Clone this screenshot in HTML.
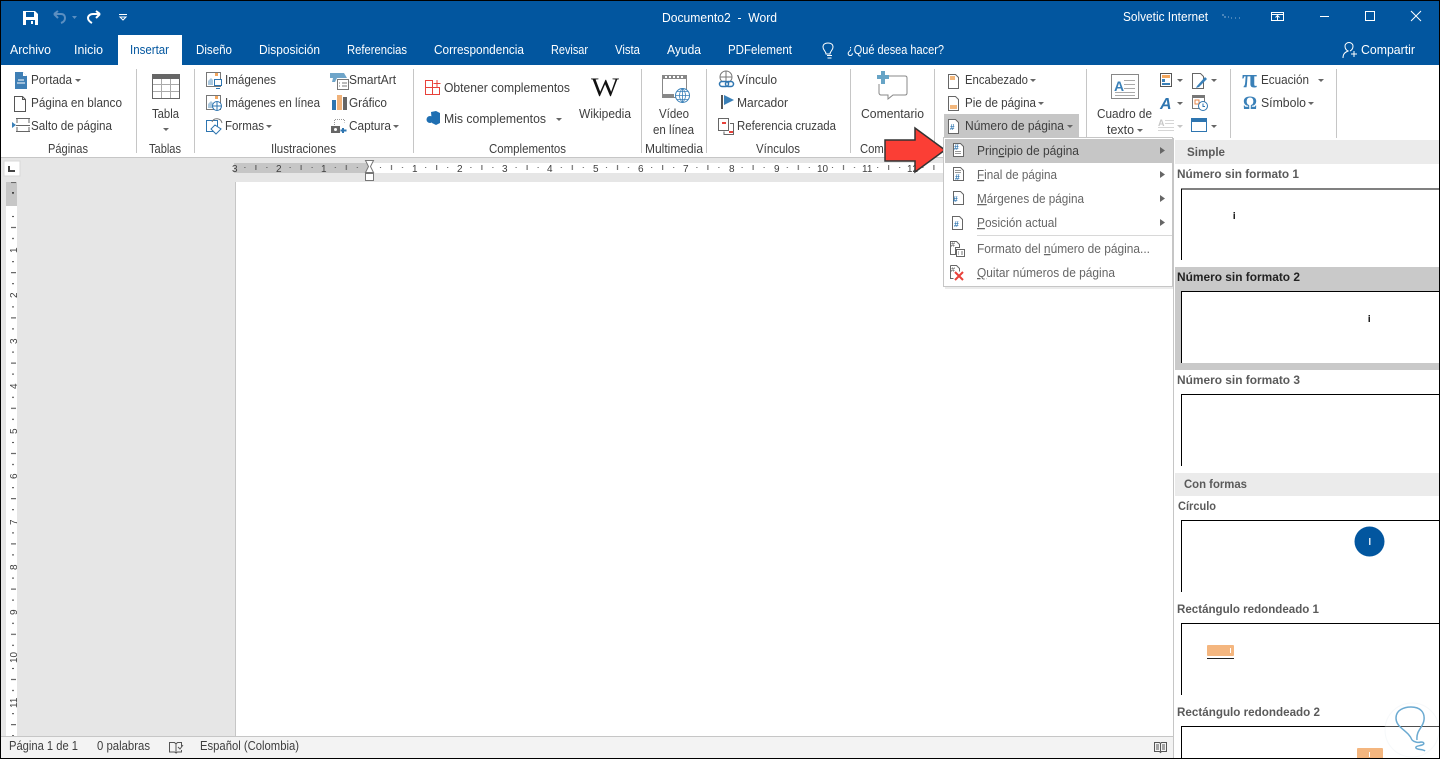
<!DOCTYPE html>
<html lang="es"><head><meta charset="utf-8"><title>Documento2 - Word</title>
<style>
html,body{margin:0;padding:0;background:#fff;width:1440px;height:759px;overflow:hidden}
svg{display:block}
text{font-family:"Liberation Sans",sans-serif;font-size:12.5px;fill:#3e3e3e}
.w text{fill:#fff}
.b text{font-weight:bold;fill:#5a5a5a;font-size:12px}
.u{text-decoration:underline}
</style></head><body>
<svg xmlns="http://www.w3.org/2000/svg" width="1440" height="759" viewBox="0 0 1440 759">
<defs>
<pattern id="rx" x="369" y="0" width="45.2" height="12" patternUnits="userSpaceOnUse">
<rect x="11" y="5" width="1" height="1" fill="#555"/><rect x="22" y="3" width="1" height="5" fill="#555"/><rect x="33" y="5" width="1" height="1" fill="#555"/>
</pattern>
<pattern id="ry" x="0" y="205" width="12" height="45.2" patternUnits="userSpaceOnUse">
<rect x="6" y="11" width="2" height="1" fill="#444"/><rect x="5" y="22" width="5" height="1" fill="#444"/><rect x="6" y="33" width="2" height="1" fill="#444"/>
</pattern>
</defs>

<rect width="1440" height="759" fill="#e6e6e6"/>
<!-- title bar -->
<rect x="0" y="0" width="1440" height="65" fill="#02569f"/>
<rect x="118" y="35" width="64" height="30" fill="#fff"/>
<rect x="0" y="65" width="1440" height="92" fill="#fff"/>
<rect x="0" y="157" width="1440" height="1" fill="#c6c6c6"/>

<!-- QAT icons -->
<path d="M23 11h12l3 3v11H23z" fill="#fff"/><rect x="26" y="12" width="8" height="5" fill="#02569f"/><rect x="26" y="20" width="9" height="5" fill="#02569f"/><rect x="31" y="21" width="2" height="3" fill="#fff"/>
<g fill="none" stroke="#5c8fc1" stroke-width="2"><path d="M54 14l4-3M54 14l4 4M54 14h7c3 0 4 2 4 4s-1 4-4 5"/></g>
<path d="M72 16h5l-2.500 3z" fill="#5c8fc1"/>
<g fill="none" stroke="#fff" stroke-width="2"><path d="M100 14l-4-3M100 14l-4 4M100 14h-7c-3 0-5 2-5 4s2 4 4 5"/></g>
<rect x="119" y="14" width="8" height="1" fill="#fff"/><path d="M120 17h6l-3 3z" fill="none" stroke="#fff"/>

<g class="w">
<text x="662" y="22" textLength="115" lengthAdjust="spacingAndGlyphs" xml:space="preserve">Documento2  -  Word</text>
<text x="1123" y="21" textLength="85" lengthAdjust="spacingAndGlyphs">Solvetic Internet</text>
<text x="10" y="54" textLength="41" lengthAdjust="spacingAndGlyphs">Archivo</text>
<text x="74" y="54" textLength="29" lengthAdjust="spacingAndGlyphs">Inicio</text>
<text x="196" y="54" textLength="36" lengthAdjust="spacingAndGlyphs">Diseño</text>
<text x="259" y="54" textLength="61" lengthAdjust="spacingAndGlyphs">Disposición</text>
<text x="347" y="54" textLength="60" lengthAdjust="spacingAndGlyphs">Referencias</text>
<text x="434" y="54" textLength="90" lengthAdjust="spacingAndGlyphs">Correspondencia</text>
<text x="551" y="54" textLength="37" lengthAdjust="spacingAndGlyphs">Revisar</text>
<text x="615" y="54" textLength="25" lengthAdjust="spacingAndGlyphs">Vista</text>
<text x="667" y="54" textLength="34" lengthAdjust="spacingAndGlyphs">Ayuda</text>
<text x="728" y="54" textLength="64" lengthAdjust="spacingAndGlyphs">PDFelement</text>
<text x="847" y="54" textLength="97" lengthAdjust="spacingAndGlyphs">¿Qué desea hacer?</text>
<text x="1361" y="54" textLength="54" lengthAdjust="spacingAndGlyphs">Compartir</text>
</g>
<text x="130" y="54" textLength="39" lengthAdjust="spacingAndGlyphs" style="fill:#02569f">Insertar</text>

<!-- window controls -->
<g fill="none" stroke="#fff" stroke-width="1">
<rect x="1271.500" y="12.500" width="12" height="8"/><path d="M1272 14.500h11M1277.500 20v-4M1275.500 17.500l2-2 2 2"/>
<path d="M1320 16.500h9"/><rect x="1365.500" y="11.500" width="9" height="9"/><path d="M1411 11l10 10M1421 11l-10 10"/>
<path d="M827.500 58h4M827 55.500h5M826 54c0-3-3-3.500-3-7 0-2.500 2-4 5-4s5 1.500 5 4c0 3.500-3 4-3 7z" stroke="#fff"/>
<path d="M1343 58c0-5 3-6 5-7-2-1-3-3-3-5 0-2 2-3.500 4-3.500s4 1.500 4 3.500c0 2-1 4-3 5M1351 54h6M1354 51v6"/>
</g>
<path d="M1222 15h2M1224 17h2M1228 17h1M1231 18h1M1235 18h1M1239 18h1" stroke="#8fb3d6" stroke-width="1" fill="none"/>

<!-- separators -->
<g fill="#c6c6c6">
<rect x="136" y="69" width="1" height="84"/><rect x="194" y="69" width="1" height="84"/><rect x="413" y="69" width="1" height="84"/>
<rect x="641" y="69" width="1" height="84"/><rect x="706" y="69" width="1" height="84"/><rect x="850" y="69" width="1" height="84"/>
<rect x="934" y="69" width="1" height="84"/><rect x="1086" y="69" width="1" height="70"/><rect x="1230" y="69" width="1" height="70"/><rect x="1336" y="69" width="1" height="70"/>
</g>

<!-- ribbon text -->
<text x="31" y="84" textLength="41" lengthAdjust="spacingAndGlyphs">Portada</text>
<text x="31" y="107" textLength="91" lengthAdjust="spacingAndGlyphs">Página en blanco</text>
<text x="31" y="130" textLength="81" lengthAdjust="spacingAndGlyphs">Salto de página</text>
<text x="152" y="118" textLength="27" lengthAdjust="spacingAndGlyphs">Tabla</text>
<text x="48" y="153" textLength="40" lengthAdjust="spacingAndGlyphs">Páginas</text>
<text x="149" y="153" textLength="32" lengthAdjust="spacingAndGlyphs">Tablas</text>
<text x="271" y="153" textLength="65" lengthAdjust="spacingAndGlyphs">Ilustraciones</text>
<text x="489" y="153" textLength="77" lengthAdjust="spacingAndGlyphs">Complementos</text>
<text x="645" y="153" textLength="58" lengthAdjust="spacingAndGlyphs">Multimedia</text>
<text x="756" y="153" textLength="44" lengthAdjust="spacingAndGlyphs">Vínculos</text>
<text x="860" y="153" textLength="64" lengthAdjust="spacingAndGlyphs">Comentarios</text>
<text x="225" y="84" textLength="51" lengthAdjust="spacingAndGlyphs">Imágenes</text>
<text x="225" y="107" textLength="95" lengthAdjust="spacingAndGlyphs">Imágenes en línea</text>
<text x="225" y="130" textLength="39" lengthAdjust="spacingAndGlyphs">Formas</text>
<text x="349" y="84" textLength="47" lengthAdjust="spacingAndGlyphs">SmartArt</text>
<text x="349" y="107" textLength="38" lengthAdjust="spacingAndGlyphs">Gráfico</text>
<text x="349" y="130" textLength="42" lengthAdjust="spacingAndGlyphs">Captura</text>
<text x="444" y="92" textLength="126" lengthAdjust="spacingAndGlyphs">Obtener complementos</text>
<text x="444" y="123" textLength="102" lengthAdjust="spacingAndGlyphs">Mis complementos</text>
<text x="579" y="118" textLength="52" lengthAdjust="spacingAndGlyphs">Wikipedia</text>
<text x="659" y="118" textLength="30" lengthAdjust="spacingAndGlyphs">Vídeo</text>
<text x="653" y="134" textLength="41" lengthAdjust="spacingAndGlyphs">en línea</text>
<text x="737" y="84" textLength="40" lengthAdjust="spacingAndGlyphs">Vínculo</text>
<text x="737" y="107" textLength="51" lengthAdjust="spacingAndGlyphs">Marcador</text>
<text x="737" y="130" textLength="99" lengthAdjust="spacingAndGlyphs">Referencia cruzada</text>
<text x="861" y="118" textLength="63" lengthAdjust="spacingAndGlyphs">Comentario</text>
<text x="965" y="84" textLength="63" lengthAdjust="spacingAndGlyphs">Encabezado</text>
<text x="965" y="107" textLength="71" lengthAdjust="spacingAndGlyphs">Pie de página</text>
<rect x="944" y="114" width="135" height="23" fill="#c6c6c6"/>
<text x="965" y="130" textLength="99" lengthAdjust="spacingAndGlyphs">Número de página</text>
<text x="1097" y="118" textLength="55" lengthAdjust="spacingAndGlyphs">Cuadro de</text>
<text x="1107" y="134" textLength="27" lengthAdjust="spacingAndGlyphs">texto</text>
<text x="1261" y="84" textLength="48" lengthAdjust="spacingAndGlyphs">Ecuación</text>
<text x="1261" y="107" textLength="45" lengthAdjust="spacingAndGlyphs">Símbolo</text>

<!-- dropdown carets -->
<g fill="#666">
<path d="M75 79h6l-3 3z"/><path d="M163 128h6l-3 3z"/><path d="M266 125h6l-3 3z"/><path d="M393 125h6l-3 3z"/>
<path d="M556 118h6l-3 3z"/><path d="M1030 79h6l-3 3z"/><path d="M1038 102h6l-3 3z"/><path d="M1067 125h6l-3 3z"/><path d="M1137 129h6l-3 3z"/>
<path d="M1177 79h6l-3 3z"/><path d="M1211 79h6l-3 3z"/><path d="M1177 102h6l-3 3z"/><path d="M1211 125h6l-3 3z"/><path d="M1318 79h6l-3 3z"/><path d="M1308 102h6l-3 3z"/>
</g>
<path d="M1177 125h6l-3 3z" fill="#c6c6c6"/>

<!-- Páginas icons -->
<path d="M15 72h8l4 4v13H15z" fill="#3f7fb5"/><path d="M23 72v4h4z" fill="#fff"/><path d="M18 80h6M17 83h8" stroke="#fff"/>
<path d="M14.500 96.500h8l3 3v12h-11zM22.500 96.500v3h3" fill="none" stroke="#555"/>
<path d="M16 118.500h14M16 131.500h14M16 125.500h14M17 119v4M29 119v4M17 127v4M29 127v4" stroke="#666" fill="none"/>
<path d="M12 122l4 3-4 3z" fill="#3a80b8"/>
<!-- table icon -->
<rect x="152.500" y="74.500" width="27" height="24" fill="#fff" stroke="#666"/><rect x="152" y="74" width="28" height="5" fill="#666"/>
<path d="M153 84.500h26M153 91.500h26M161.500 79v19M170.500 79v19" stroke="#aaa" fill="none"/>

<!-- Ilustraciones icons -->
<g fill="none" stroke-width="1">
<rect x="206.500" y="72.500" width="14" height="14" stroke="#777"/><rect x="214.500" y="79.500" width="7" height="6" fill="#fff" stroke="#2e75b0"/><path d="M216 88.500h4" stroke="#2e75b0"/>
<path d="M208 85v-4l3-3 2 2v5z" fill="#a9c7de"/><rect x="215" y="73" width="3" height="3" fill="#f3a65d"/>
<rect x="206.500" y="95.500" width="14" height="14" stroke="#777"/><path d="M208 108v-4l3-3 2 2v5z" fill="#a9c7de"/><rect x="215" y="96" width="3" height="3" fill="#f3a65d"/>
<circle cx="217" cy="106" r="4.500" fill="#fff" stroke="#2e75b0"/><path d="M212.500 106h9M217 101.500v9" stroke="#2e75b0"/>
<rect x="206.500" y="120.500" width="11" height="11" stroke="#2e75b0"/><path d="M215 125l-4 4 5 5 5-5z" fill="#fff" stroke="#2e75b0"/><path d="M212 122c2-5 9-4 10 1" stroke="#777"/>
<rect x="337.500" y="79.500" width="11" height="10" stroke="#777"/><path d="M342 83h5M342 86h5M339 83h1M339 86h1" stroke="#777"/>
</g>
<path d="M330 73h14l3 5h-10l-2 4h-3l1-4h-3z" fill="#6fa5c9"/>
<rect x="332" y="100" width="4" height="10" fill="#2e75b0"/><rect x="337" y="95" width="5" height="15" fill="#f0b27a"/><rect x="343" y="97" width="4" height="13" fill="#666"/>
<path d="M334.500 127v-7.500h10v3" fill="none" stroke="#999" stroke-dasharray="1 1"/><rect x="331" y="126" width="9" height="7" fill="#666"/><circle cx="335.500" cy="129.500" r="1.500" fill="#fff"/><path d="M343 128v5M340.500 130.500h6" stroke="#2e75b0" stroke-width="2"/>

<!-- complementos -->
<g fill="none" stroke="#e8413a"><path d="M425.500 80.500h7v7h-7zM425.500 87.500h14v7h-14zM432.500 87.500v7M433.500 83.500h7M437 80v7"/></g>
<path d="M431 112l5-1 4 2v10l-4 2-4-2z" fill="#1f6fb2"/><circle cx="430" cy="119.500" r="3.500" fill="#1f6fb2"/>
<text x="591" y="96" textLength="28" lengthAdjust="spacingAndGlyphs" style="font-family:'Liberation Serif',serif;font-size:26px;fill:#111">W</text>

<!-- media -->
<rect x="662.500" y="75.500" width="24" height="22" fill="#fff" stroke="#888"/><rect x="662" y="75" width="24" height="4" fill="#888"/><rect x="662" y="94" width="12" height="4" fill="#888"/>
<g fill="#fff"><rect x="665" y="76" width="2" height="2"/><rect x="669" y="76" width="2" height="2"/><rect x="673" y="76" width="2" height="2"/><rect x="677" y="76" width="2" height="2"/><rect x="681" y="76" width="2" height="2"/></g>
<circle cx="682.500" cy="95.500" r="7" fill="#fff" stroke="#3a80b8"/><path d="M675.500 95.500h14M682.500 88.500v14M677 91.500h11M677 99.500h11M682.500 88.500c-4 4-4 10 0 14M682.500 88.500c4 4 4 10 0 14" fill="none" stroke="#3a80b8" stroke-width=".8"/>

<!-- vinculos -->
<circle cx="726" cy="77" r="6" fill="#fff" stroke="#777"/><path d="M720 77h12M726 71v12" stroke="#777"/>
<rect x="719.500" y="81.500" width="9" height="5" rx="2.500" fill="#fff" stroke="#2e75b0" stroke-width="1.500"/><rect x="725.500" y="81.500" width="8" height="5" rx="2.500" fill="none" stroke="#2e75b0" stroke-width="1.500"/>
<rect x="721" y="95" width="2" height="14" fill="#555"/><path d="M724 95l10 5-10 5z" fill="#3a80b8"/>
<path d="M718.500 118.500h10v12h-10zM730 123.500h3.500v11H724v-3" fill="none" stroke="#666"/><rect x="722" y="122" width="4" height="2" fill="#e8413a"/><rect x="729" y="131" width="4" height="2" fill="#e8413a"/>

<!-- comment -->
<path d="M880 76h25c1.500 0 2 1 2 2v15c0 1-.5 2-2 2h-12l-5 4v-4h-7c-1 0-2-1-2-2V84" fill="#fff" stroke="#888"/>
<rect x="881" y="71" width="4" height="13" fill="#67a4c6"/><rect x="877" y="75" width="12" height="4" fill="#67a4c6"/>

<!-- header footer icons -->
<path d="M948.500 74.500h7l3 3v11h-10z" fill="#fff" stroke="#666"/><rect x="950" y="76" width="5" height="4" fill="#f3b77c"/>
<path d="M948.500 96.500h7l3 3v11h-10z" fill="#fff" stroke="#666"/><rect x="950" y="105" width="7" height="4" fill="#f3b77c"/>
<path d="M948.500 119.500h7l3 3v11h-10z" fill="#fff" stroke="#666"/><text x="950" y="130" style="font-size:8px;font-weight:bold;fill:#2e75b0">#</text>

<!-- text group icons -->
<rect x="1111.500" y="74.500" width="27" height="24" fill="#fff" stroke="#888"/><text x="1114" y="91" style="font-size:14px;font-weight:bold;fill:#3a80b8">A</text><path d="M1124 80.500h11M1124 84.500h11M1124 88.500h11M1115 92.500h20M1115 95.500h20" stroke="#aaa"/>
<rect x="1160.500" y="73.500" width="11" height="13" fill="#fff" stroke="#555"/><rect x="1162" y="75" width="8" height="3" fill="#f3a65d"/><rect x="1162" y="79" width="3" height="3" fill="#3a80b8"/><rect x="1162" y="83" width="8" height="2" fill="#3a80b8"/>
<text x="1160" y="109" style="font-family:'Liberation Sans';font-size:16px;font-weight:bold;font-style:italic;fill:#2e75b0">A</text>
<text x="1158" y="126" style="font-size:9px;font-weight:bold;fill:#c6c6c6">A</text><path d="M1165 120.500h9M1165 123.500h9M1158 127.500h16M1158 130.500h16" stroke="#d6d6d6"/>
<path d="M1192.500 73.500h8l3 3v12h-11z" fill="#fff" stroke="#666"/><path d="M1197 86l8-9 2 2-8 8-3 1z" fill="#3a80b8"/>
<rect x="1192.500" y="96.500" width="12" height="12" fill="#fff" stroke="#777"/><rect x="1192" y="95" width="13" height="3" fill="#777"/><rect x="1195" y="100" width="4" height="4" fill="none" stroke="#e8874a"/><circle cx="1203" cy="106" r="4.500" fill="#fff" stroke="#2e75b0"/><path d="M1203 103.500v3h2" stroke="#2e75b0" fill="none"/>
<rect x="1191.500" y="119.500" width="15" height="12" fill="#fff" stroke="#2e75b0"/><rect x="1191" y="118" width="16" height="4" fill="#2e75b0"/>
<text x="1242" y="87" textLength="15" lengthAdjust="spacingAndGlyphs" style="font-family:'Liberation Serif',serif;font-size:26px;font-weight:bold;fill:#3a80b8">π</text>
<text x="1243" y="109" textLength="14" lengthAdjust="spacingAndGlyphs" style="font-family:'Liberation Serif',serif;font-size:19px;font-weight:bold;fill:#3a80b8">Ω</text>

<!-- ruler -->
<rect x="234" y="163" width="135" height="10" fill="#c6c6c6"/>
<rect x="369" y="163" width="600" height="10" fill="#fff"/>
<svg x="234" y="162" width="735" height="12" viewBox="234 0 735 12"><rect x="234" y="0" width="735" height="12" fill="url(#rx)"/></svg>
<g>
<text x="232" y="172" style="font-size:10px">3</text><text x="276" y="172" style="font-size:10px">2</text><text x="321" y="172" style="font-size:10px">1</text>
<text x="412" y="172" style="font-size:10px">1</text><text x="457" y="172" style="font-size:10px">2</text><text x="502" y="172" style="font-size:10px">3</text><text x="547" y="172" style="font-size:10px">4</text><text x="593" y="172" style="font-size:10px">5</text><text x="638" y="172" style="font-size:10px">6</text><text x="683" y="172" style="font-size:10px">7</text><text x="729" y="172" style="font-size:10px">8</text><text x="774" y="172" style="font-size:10px">9</text><text x="817" y="172" style="font-size:10px">10</text><text x="862" y="172" style="font-size:10px">11</text><text x="907" y="172" style="font-size:10px">12</text>
</g>
<path d="M365.500 160.500h8l-3 6 3 6h-8l3-6z" fill="#fff" stroke="#777"/><rect x="365.500" y="173.500" width="8" height="7" fill="#fff" stroke="#777"/>

<!-- corner & vertical ruler -->
<rect x="4" y="161" width="16" height="15" fill="#fff" stroke="#d8d8d8"/><path d="M9 166v5h6" fill="none" stroke="#444" stroke-width="2"/>
<rect x="6" y="182" width="11" height="24" fill="#c6c6c6"/><rect x="6" y="206" width="11" height="530" fill="#fff"/>
<svg x="6" y="182" width="11" height="554" viewBox="0 182 11 554"><rect x="0" y="182" width="11" height="554" fill="url(#ry)"/></svg>
<rect x="12" y="192" width="2" height="1" fill="#444"/>
<g>
<text transform="translate(17,253) rotate(-90)" style="font-size:10px">1</text><text transform="translate(17,298) rotate(-90)" style="font-size:10px">2</text><text transform="translate(17,344) rotate(-90)" style="font-size:10px">3</text><text transform="translate(17,389) rotate(-90)" style="font-size:10px">4</text><text transform="translate(17,434) rotate(-90)" style="font-size:10px">5</text><text transform="translate(17,479) rotate(-90)" style="font-size:10px">6</text><text transform="translate(17,525) rotate(-90)" style="font-size:10px">7</text><text transform="translate(17,570) rotate(-90)" style="font-size:10px">8</text><text transform="translate(17,615) rotate(-90)" style="font-size:10px">9</text><text transform="translate(17,663) rotate(-90)" style="font-size:10px">10</text><text transform="translate(17,708) rotate(-90)" style="font-size:10px">11</text>
</g>

<!-- page -->
<rect x="235" y="182" width="1205" height="554" fill="#fff"/><rect x="235" y="182" width="1" height="554" fill="#c6c6c6"/>

<!-- status bar -->
<rect x="0" y="736" width="1440" height="23" fill="#f3f3f3"/><rect x="0" y="736" width="1440" height="1" fill="#c6c6c6"/>
<text x="9" y="750" textLength="69" lengthAdjust="spacingAndGlyphs">Página 1 de 1</text>
<text x="97" y="750" textLength="53" lengthAdjust="spacingAndGlyphs">0 palabras</text>
<path d="M169.500 742.500h5l1.500 1.500v9l-1.500-1h-5zM176 744l1.500-1.500h4v4M181.500 750v2h-4l-1.500 1" fill="none" stroke="#555"/><path d="M178 747l2 2 3-4" fill="none" stroke="#555"/>
<text x="200" y="750" textLength="99" lengthAdjust="spacingAndGlyphs">Español (Colombia)</text>
<path d="M1154.500 742.500h5l1 1 1-1h5v9h-5l-1 1-1-1h-5zM1160.500 743.500v8M1156 745h3M1156 747h3M1156 749h3M1162 745h3M1162 747h3M1162 749h3" fill="none" stroke="#555"/>

<!-- arrow -->
<path d="M885 140h30v-12l30 22-30 22v-11h-30z" fill="#fb3e35" stroke="#333" stroke-width="1.500"/>

<!-- menu -->
<rect x="945" y="139" width="229" height="150" fill="#000" opacity=".08"/>
<rect x="943.500" y="137.500" width="229" height="149" fill="#fff" stroke="#c6c6c6"/>
<rect x="945" y="139" width="227" height="24" fill="#c6c6c6"/>
<rect x="977" y="235" width="195" height="1" fill="#d8d8d8"/>
<text x="977" y="155" textLength="102" lengthAdjust="spacingAndGlyphs">Prin<tspan class="u">c</tspan>ipio de página</text>
<text x="977" y="179" textLength="80" lengthAdjust="spacingAndGlyphs" style="fill:#666"><tspan class="u">F</tspan>inal de página</text>
<text x="977" y="203" textLength="107" lengthAdjust="spacingAndGlyphs" style="fill:#666"><tspan class="u">M</tspan>árgenes de página</text>
<text x="977" y="227" textLength="80" lengthAdjust="spacingAndGlyphs" style="fill:#666"><tspan class="u">P</tspan>osición actual</text>
<text x="977" y="253" textLength="173" lengthAdjust="spacingAndGlyphs" style="fill:#666">Formato del <tspan class="u">n</tspan>úmero de página...</text>
<text x="977" y="277" textLength="138" lengthAdjust="spacingAndGlyphs" style="fill:#666"><tspan class="u">Q</tspan>uitar números de página</text>
<g fill="#666"><path d="M1160 147l5 3.500-5 3.500z"/><path d="M1160 171l5 3.500-5 3.500z"/><path d="M1160 195l5 3.500-5 3.500z"/><path d="M1160 219l5 3.500-5 3.500z"/></g>
<g fill="#fff" stroke="#666">
<path d="M953.500 143.500h7l3 3v10h-10z"/><path d="M953.500 167.500h7l3 3v10h-10z"/><path d="M953.500 191.500h7l3 3v10h-10z"/><path d="M952.500 216.500h7l3 3v10h-10z"/>
</g>
<text x="954" y="150" style="font-size:8.500px;font-weight:bold;fill:#2e75b0">#</text><text x="955" y="180" style="font-size:8.500px;font-weight:bold;fill:#2e75b0">#</text><text x="953" y="202" style="font-size:8.500px;font-weight:bold;fill:#2e75b0">#</text><text x="954" y="227" style="font-size:8.500px;font-weight:bold;fill:#2e75b0">#</text>
<path d="M955 153.500h6M955 151.500h6M955 170.500h6M955 172.500h6" stroke="#999"/>
<path d="M950.500 241.500h6l3 3v3h-4v7h-5z" fill="#fff" stroke="#666"/><rect x="956.500" y="249.500" width="8" height="7" fill="#fff" stroke="#666"/><text x="951" y="247" style="font-size:7px;fill:#555">#</text><path d="M958 252h1M961 252h2M958 254h1M961 254h2" stroke="#777"/>
<path d="M950.500 265.500h6l3 3v3M950.500 265.500v13h3" fill="none" stroke="#666"/><text x="951" y="272" style="font-size:7px;fill:#555">#</text>
<path d="M955 272l8 8M963 272l-8 8" stroke="#e8413a" stroke-width="2"/>

<!-- gallery -->
<rect x="1173" y="138" width="267" height="621" fill="#fff"/><rect x="1173" y="138" width="1" height="621" fill="#c6c6c6"/>
<rect x="1175" y="140" width="264" height="24" fill="#ebebeb"/>
<rect x="1175" y="473" width="264" height="23" fill="#ebebeb"/>
<rect x="1175" y="267" width="264" height="103" fill="#c9c9c9"/>
<rect x="1182" y="292" width="257" height="71" fill="#fff"/>
<g class="b">
<text x="1187" y="156" textLength="38" lengthAdjust="spacingAndGlyphs">Simple</text>
<text x="1177" y="178" textLength="122" lengthAdjust="spacingAndGlyphs">Número sin formato 1</text>
<text x="1177" y="281" textLength="123" lengthAdjust="spacingAndGlyphs" style="fill:#222">Número sin formato 2</text>
<text x="1177" y="384" textLength="123" lengthAdjust="spacingAndGlyphs">Número sin formato 3</text>
<text x="1184" y="488" textLength="63" lengthAdjust="spacingAndGlyphs">Con formas</text>
<text x="1178" y="510" textLength="38" lengthAdjust="spacingAndGlyphs">Círculo</text>
<text x="1177" y="613" textLength="142" lengthAdjust="spacingAndGlyphs">Rectángulo redondeado 1</text>
<text x="1177" y="716" textLength="143" lengthAdjust="spacingAndGlyphs">Rectángulo redondeado 2</text>
</g>
<g fill="none" stroke="#000" stroke-width="1">
<path d="M1181.500 260v-71h258"/><path d="M1181.500 363v-71.500h258"/><path d="M1181.500 466v-71.500h258"/><path d="M1181.500 592v-71.500h258"/><path d="M1181.500 695v-71.500h258"/><path d="M1181.500 759v-32.500h258"/>
</g>
<g fill="#222"><rect x="1233.500" y="212" width="1.500" height="1.500"/><rect x="1233.500" y="214" width="1.500" height="5"/><rect x="1368.500" y="315" width="1.500" height="1.500"/><rect x="1368.500" y="317" width="1.500" height="5"/></g>
<circle cx="1369.500" cy="541.500" r="15" fill="#02569f"/><rect x="1369" y="538" width="1.500" height="7" fill="#d8e4ef"/>
<rect x="1207" y="645" width="27" height="11" rx="1" fill="#f4b67f"/><rect x="1230" y="648" width="1" height="5" fill="#fff"/><rect x="1207" y="658" width="27" height="1" fill="#222"/>
<rect x="1357" y="748" width="26" height="11" rx="1" fill="#f4b67f"/><rect x="1369" y="752" width="1" height="5" fill="#fff"/>

<!-- watermark -->
<circle cx="1412" cy="730" r="27" fill="#fff" opacity=".3" stroke="#e3ebf1"/>
<path d="M1412 740C1408 730 1396 728 1396 718C1396 710 1404 707 1411 707C1420 707 1425 712 1424 720C1423 728 1416 730 1417 740M1412 740c2 2 6 3 9 2c3 0 4 2 1 3c-3 1-7 1-6 3c1 2 7 1 9 3" fill="none" stroke="#6baad1" stroke-width="1.500"/>

<!-- outer frame -->
<rect x="0" y="0" width="1440" height="1" fill="#000"/><rect x="0" y="0" width="1" height="759" fill="#000"/><rect x="1439" y="0" width="1" height="759" fill="#000"/><rect x="0" y="758" width="1440" height="1" fill="#000"/>
</svg>
</body></html>
